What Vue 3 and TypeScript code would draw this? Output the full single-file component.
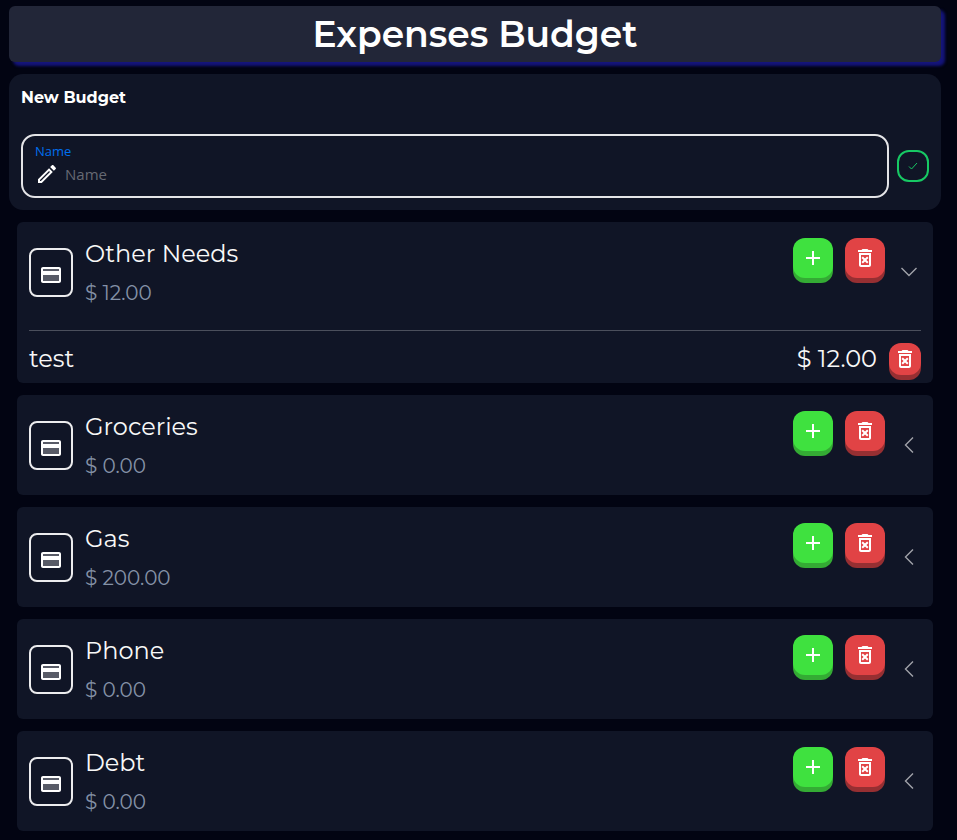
<script setup lang="ts">
import { ref } from 'vue'

interface Expense {
  id: number
  name: string
  amount: number
}

interface Budget {
  id: number
  name: string
  amount: number
  open: boolean
  expenses: Expense[]
}

const newName = ref('')

const budgets = ref<Budget[]>([
  { id: 1, name: 'Other Needs', amount: 12, open: true, expenses: [{ id: 1, name: 'test', amount: 12 }] },
  { id: 2, name: 'Groceries', amount: 0, open: false, expenses: [] },
  { id: 3, name: 'Gas', amount: 200, open: false, expenses: [] },
  { id: 4, name: 'Phone', amount: 0, open: false, expenses: [] },
  { id: 5, name: 'Debt', amount: 0, open: false, expenses: [] },
])

const trashPath =
  'M14.12 10.47 12 12.59l-2.13-2.12-1.41 1.41L10.59 14l-2.12 2.12 1.41 1.41L12 15.41l2.12 2.12 1.41-1.41L13.41 14l2.12-2.12zM15.5 4l-1-1h-5l-1 1H5v2h14V4zM6 19c0 1.1.9 2 2 2h8c1.1 0 2-.9 2-2V7H6v12zM8 9h8v10H8V9z'

function money(value: number): string {
  return `$ ${value.toFixed(2)}`
}

function addBudget(): void {
  const name = newName.value.trim()
  if (!name) return
  budgets.value.push({ id: Date.now(), name, amount: 0, open: false, expenses: [] })
  newName.value = ''
}

function removeBudget(id: number): void {
  budgets.value = budgets.value.filter((b) => b.id !== id)
}

function removeExpense(budget: Budget, id: number): void {
  budget.expenses = budget.expenses.filter((e) => e.id !== id)
}
</script>

<template>
  <main class="page">
    <header class="banner">
      <h1>Expenses Budget</h1>
    </header>

    <form class="panel" @submit.prevent="addBudget">
      <h2>New Budget</h2>
      <div class="form-row">
        <div class="field">
          <label for="budget-name">Name</label>
          <div class="field-input">
            <svg viewBox="0 0 24 24" class="icon" aria-hidden="true">
              <path d="M14.06 9.02l.92.92L5.92 19H5v-.92l9.06-9.06M17.66 3c-.25 0-.51.1-.7.29l-1.83 1.83 3.75 3.75 1.83-1.83c.39-.39.39-1.02 0-1.41l-2.34-2.34c-.2-.2-.45-.29-.71-.29zm-3.6 3.19L3 17.25V21h3.75L17.81 9.94l-3.75-3.75z" />
            </svg>
            <input id="budget-name" v-model="newName" type="text" placeholder="Name" />
          </div>
        </div>
        <button type="submit" class="confirm" aria-label="Save budget">
          <svg viewBox="0 0 12 12" aria-hidden="true">
            <path d="M2 6.5 4.5 9 10 3" />
          </svg>
        </button>
      </div>
    </form>

    <ul class="budgets">
      <li v-for="budget in budgets" :key="budget.id" class="card">
        <div class="card-head">
          <span class="badge">
            <svg viewBox="0 0 24 24" class="icon" aria-hidden="true">
              <path opacity=".3" d="M4 12h16v6H4zm0-6h16v2H4z" />
              <path d="M20 4H4c-1.11 0-1.99.89-1.99 2L2 18c0 1.11.89 2 2 2h16c1.11 0 2-.89 2-2V6c0-1.11-.89-2-2-2zm0 14H4v-6h16v6zm0-10H4V6h16v2z" />
            </svg>
          </span>
          <div class="info">
            <h3>{{ budget.name }}</h3>
            <p>{{ money(budget.amount) }}</p>
          </div>
          <div class="actions">
            <button type="button" class="key add" :aria-label="`Add to ${budget.name}`">
              <svg viewBox="0 0 24 24" class="icon" aria-hidden="true">
                <path d="M19 13h-6v6h-2v-6H5v-2h6V5h2v6h6v2z" />
              </svg>
            </button>
            <button type="button" class="key remove" :aria-label="`Delete ${budget.name}`" @click="removeBudget(budget.id)">
              <svg viewBox="0 0 24 24" class="icon" aria-hidden="true"><path :d="trashPath" /></svg>
            </button>
          </div>
          <button
            type="button"
            class="toggle"
            :aria-label="`Toggle ${budget.name}`"
            :aria-expanded="budget.open"
            @click="budget.open = !budget.open"
          >
            <svg viewBox="0 0 24 24" aria-hidden="true">
              <path :d="budget.open ? 'M4.5 8 12 15.5 19.5 8' : 'M16 4.5 8.5 12 16 19.5'" />
            </svg>
          </button>
        </div>

        <ul v-if="budget.open" class="expenses">
          <li v-for="expense in budget.expenses" :key="expense.id" class="expense">
            <span class="expense-name">{{ expense.name }}</span>
            <span>{{ money(expense.amount) }}</span>
            <button type="button" class="key remove small" :aria-label="`Delete ${expense.name}`" @click="removeExpense(budget, expense.id)">
              <svg viewBox="0 0 24 24" class="icon" aria-hidden="true"><path :d="trashPath" /></svg>
            </button>
          </li>
        </ul>
      </li>
    </ul>
  </main>
</template>

<style>
body {
  margin: 0;
  background: #020412;
}
</style>

<style scoped>
* {
  box-sizing: border-box;
}

h1,
h2,
h3,
p,
ul {
  margin: 0;
  padding: 0;
}

ul {
  list-style: none;
}

button {
  padding: 0;
  border: 0;
  background: none;
  cursor: pointer;
}

.page {
  display: flex;
  flex-direction: column;
  gap: 12px;
  padding: 6px 16px 9px 9px;
  color: #f8f8f8;
  font-family: Montserrat, Inter, "Liberation Sans", sans-serif;
}

.icon {
  display: block;
  flex: none;
  width: 24px;
  height: 24px;
  fill: #ffffff;
}

.banner {
  display: flex;
  justify-content: center;
  border-radius: 6px;
  background: #222638;
  box-shadow: 4px 4px 3px #14147a;
}

h1 {
  color: #ffffff;
  font-size: 36px;
  font-weight: 600;
  line-height: 56px;
}

.panel {
  display: flex;
  flex-direction: column;
  gap: 24px;
  padding: 12px;
  border-radius: 14px;
  background: #101526;
}

h2 {
  color: #ffffff;
  font-size: 16px;
  font-weight: 700;
  line-height: 24px;
}

.form-row {
  display: flex;
  align-items: center;
  gap: 8px;
}

.field {
  flex: 1;
  height: 64px;
  padding: 6px 12px;
  border: 2px solid #e4e4e7;
  border-radius: 14px;
  font-family: "Open Sans", "Noto Sans", sans-serif;
}

.field label {
  display: block;
  margin-bottom: 2px;
  color: #006fee;
  font-size: 13px;
  line-height: 18px;
}

.field-input {
  display: flex;
  align-items: center;
  gap: 6px;
}

.field input {
  flex: 1;
  min-width: 0;
  height: 24px;
  padding: 0;
  border: 0;
  outline: 0;
  background: transparent;
  color: #f4f4f5;
  font-family: inherit;
  font-size: 15px;
}

.field input::placeholder {
  color: #666973;
  opacity: 1;
}

.confirm {
  display: grid;
  place-items: center;
  width: 32px;
  height: 32px;
  border: 2px solid #17c964;
  border-radius: 12px;
}

.confirm svg {
  width: 12px;
  height: 12px;
  fill: none;
  stroke: #17c964;
  stroke-width: 1;
}

.budgets {
  display: flex;
  flex-direction: column;
  gap: 12px;
  padding: 0 8px;
}

.card {
  padding: 0 12px;
  border-radius: 6px;
  background: #101526;
}

.card-head {
  display: flex;
  align-items: center;
  min-height: 100px;
}

.badge {
  padding: 13px 8px 8px;
  border: 2px solid #ececee;
  border-radius: 8px;
}

.info {
  flex: 1;
  min-width: 0;
  padding: 0 12px;
}

.info h3 {
  font-size: 24px;
  font-weight: 400;
  line-height: 42px;
}

.info p {
  color: #8491a7;
  font-size: 20px;
  line-height: 36px;
}

.actions {
  display: flex;
  align-self: flex-start;
  gap: 12px;
  padding-top: 16px;
}

.key {
  display: grid;
  place-items: center;
  width: 40px;
  height: 40px;
  border-radius: 12px;
}

.key.add {
  background: #3fe13f;
  box-shadow: 0 5px 0 #34ab34;
}

.key.remove {
  background: #e14345;
  box-shadow: 0 5px 0 #962f32;
}

.key.small {
  width: 32px;
  height: 32px;
}

.toggle {
  margin-left: 12px;
}

.toggle svg {
  display: block;
  width: 24px;
  height: 24px;
  fill: none;
  stroke: #a1a3aa;
  stroke-width: 1.4;
}

.expenses {
  margin-top: 8px;
  padding-bottom: 8px;
  border-top: 1px solid #4b4f5c;
}

.expense {
  display: flex;
  align-items: center;
  gap: 12px;
  padding-top: 12px;
  font-size: 24px;
  line-height: 32px;
}

.expense-name {
  flex: 1;
}
</style>
